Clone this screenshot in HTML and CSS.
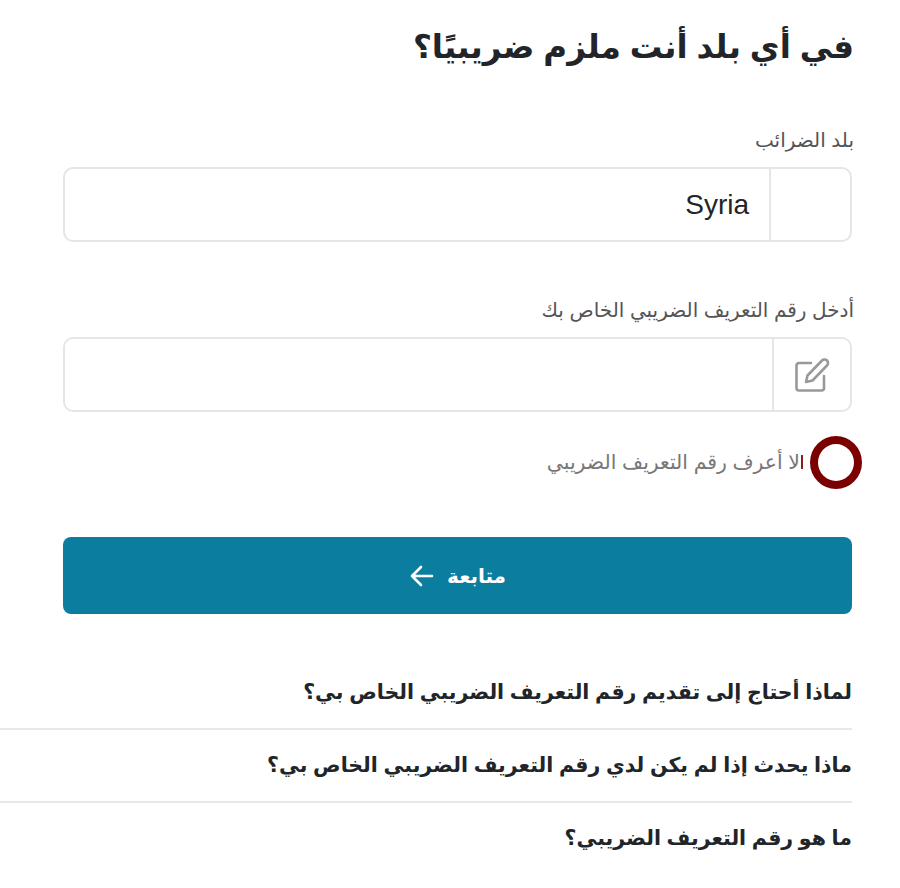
FILE: index.html
```html
<!DOCTYPE html>
<html lang="ar" dir="rtl">
<head>
  <meta charset="UTF-8">
  <meta name="viewport" content="width=device-width, initial-scale=1.0">
  <title>الرقم الضريبي</title>
  <link rel="stylesheet" href="styles.css">
</head>
<body>
  <div class="tax-page">
    <h1 class="tax-title">في أي بلد أنت ملزم ضريبيًا؟</h1>

    <div class="tax-field tax-field-country">
      <label class="tax-label">بلد الضرائب</label>
      <div class="tax-input">
        <span class="tax-addon"></span>
        <span class="tax-value">Syria</span>
      </div>
    </div>

    <div class="tax-field tax-field-number">
      <label class="tax-label">أدخل رقم التعريف الضريبي الخاص بك</label>
      <div class="tax-input">
        <span class="tax-addon tax-addon-icon">
          <svg width="36" height="36" viewBox="0 0 36 36" fill="none" stroke="#999" stroke-width="2.6" stroke-linecap="round" stroke-linejoin="round">
            <path d="M17 6H5A2.500 2.500 0 0 0 2.500 8.500V31A2.500 2.500 0 0 0 5 33.500H27.500A2.500 2.500 0 0 0 30 31V19"/>
            <path d="M28 3.500a3.400 3.400 0 0 1 5 5L18.500 23.500l-6.500 1.500L13.500 18.500Z"/>
          </svg>
        </span>
      </div>
    </div>

    <div class="tax-check">
      <span class="tax-radio"></span>
      <span class="tax-check-bar"></span>
      <span class="tax-check-text">لا أعرف رقم التعريف الضريبي</span>
    </div>

    <button class="tax-submit" type="button">
      <span>متابعة</span>
      <svg width="26" height="26" viewBox="0 0 26 26" fill="none" stroke="#fff" stroke-width="2.6" stroke-linecap="round" stroke-linejoin="round">
        <path d="M23 13H3M12 4l-9 9 9 9"/>
      </svg>
    </button>

    <ul class="tax-faq">
      <li>لماذا أحتاج إلى تقديم رقم التعريف الضريبي الخاص بي؟</li>
      <li>ماذا يحدث إذا لم يكن لدي رقم التعريف الضريبي الخاص بي؟</li>
      <li>ما هو رقم التعريف الضريبي؟</li>
    </ul>
  </div>
</body>
</html>
```

FILE: styles.css
```css
* {
  box-sizing: border-box;
}
body {
  margin: 0;
  background: #fff;
  font-family: "Liberation Sans", "DejaVu Sans", sans-serif;
  color: #212529;
}
.tax-page {
  padding: 0 48px 0 0;
}
.tax-title {
  margin: 0 -2px 0 0;
  padding-top: 23px;
  height: 128px;
  font-size: 32.500px;
  line-height: 48px;
  font-weight: bold;
}
.tax-label {
  display: block;
  height: 39px;
  margin-right: -2px;
  font-size: 20px;
  line-height: 24px;
  color: #555;
}
.tax-field {
  margin-left: 63px;
}
.tax-field-country {
  height: 170px;
}
.tax-input {
  display: flex;
  height: 75px;
  border: 2px solid #e6e6e6;
  border-radius: 10px;
}
.tax-addon {
  flex: none;
  display: flex;
  align-items: center;
  justify-content: center;
  width: 81px;
  border-left: 2px solid #e6e6e6;
}
.tax-addon-icon {
  width: 78px;
}
.tax-value {
  flex: 1;
  padding: 0 20px;
  font-size: 28px;
  line-height: 71px;
  color: #212529;
  text-align: right;
}
.tax-check {
  display: flex;
  align-items: center;
  margin-top: 24px;
  margin-right: -10px;
  height: 52px;
}
.tax-radio {
  flex: none;
  width: 52px;
  height: 53px;
  border: 8px solid #7b0000;
  border-radius: 50%;
}
.tax-check-bar {
  flex: none;
  width: 2px;
  height: 14px;
  margin: 0 7px 0 1px;
  background: #8c1c1c;
}
.tax-check-text {
  font-size: 20.400px;
  color: #777;
}
.tax-submit {
  display: flex;
  align-items: center;
  justify-content: center;
  gap: 12px;
  width: 789px;
  height: 77px;
  margin: 49px 0 0 0;
  border: 0;
  border-radius: 8px;
  background: #0b7ea0;
  color: #fff;
  font-family: inherit;
  font-size: 20px;
  font-weight: bold;
}
.tax-faq {
  list-style: none;
  margin: 44px 0 0;
  padding: 0;
}
.tax-faq li {
  height: 73px;
  padding-top: 20px;
  border-bottom: 2px solid #e8e8e8;
  font-size: 20.500px;
  line-height: 30px;
  font-weight: bold;
  color: #212529;
}
.tax-faq li:first-child {
  height: 72px;
  padding-top: 19px;
}
.tax-faq li:last-child {
  border-bottom: 0;
}
```
